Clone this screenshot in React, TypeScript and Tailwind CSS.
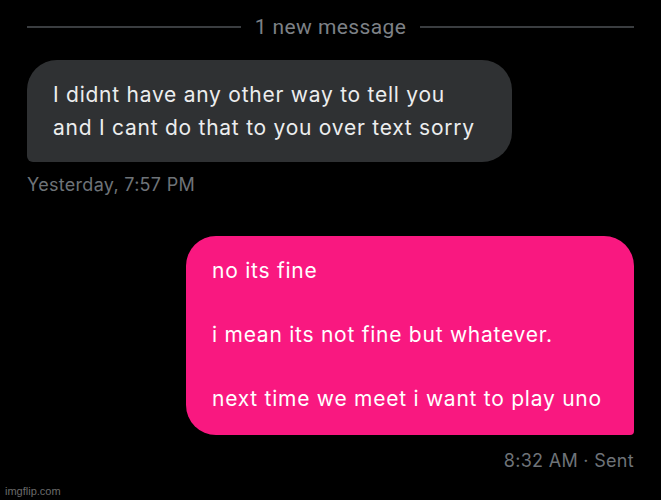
export default function App() {
  return (
    <div className="relative w-[661px] h-[500px] bg-black overflow-hidden font-['Inter','Noto_Sans',sans-serif]">
      <div className="flex flex-col px-[27px]">
        {/* DIVIDER */}
        <div className="flex items-center gap-[14px] h-[20px] mt-[17px]">
          <div className="flex-1 h-[2px] bg-[#3a3d40]" />
          <span className="text-[21px] leading-[20px] text-[#7d8186] tracking-[0.4px] font-['Roboto',sans-serif]">
            1 new message
          </span>
          <div className="flex-1 h-[2px] bg-[#3a3d40]" />
        </div>

        {/* RECEIVED */}
        <div className="mt-[23px] self-start w-[485px] h-[102px] bg-[#2f3133] rounded-[30px] rounded-bl-[6px] px-[26px] py-[18px]">
          <p className="text-[21px] leading-[33px] tracking-[0.75px] text-[#ecedee]">
            I didnt have any other way to tell you
            <br />
            and I cant do that to you over text sorry
          </p>
        </div>
        <div className="mt-[13px] text-[18px] leading-[20px] tracking-[0.3px] text-[#6e7378]">
          Yesterday, 7:57 PM
        </div>

        {/* SENT */}
        <div className="mt-[41px] self-end w-[448px] h-[199px] bg-[#f91880] rounded-[30px] rounded-br-[4px] pl-[26px] pt-[19px]">
          <p className="text-[21px] leading-[32px] tracking-[0.75px] text-white">
            no its fine
            <br />
            <br />
            i mean its not fine but whatever.
            <br />
            <br />
            next time we meet i want to play uno
          </p>
        </div>
        <div className="mt-[16px] self-end text-[18px] leading-[20px] tracking-[0.3px] text-[#6e7378]">
          8:32 AM · Sent
        </div>
      </div>

      {/* WATERMARK */}
      <div className="absolute left-[5px] bottom-[3px] text-[11px] leading-[12px] text-[#6b6b6b] font-['Liberation_Sans',sans-serif]">
        imgflip.com
      </div>
    </div>
  );
}
